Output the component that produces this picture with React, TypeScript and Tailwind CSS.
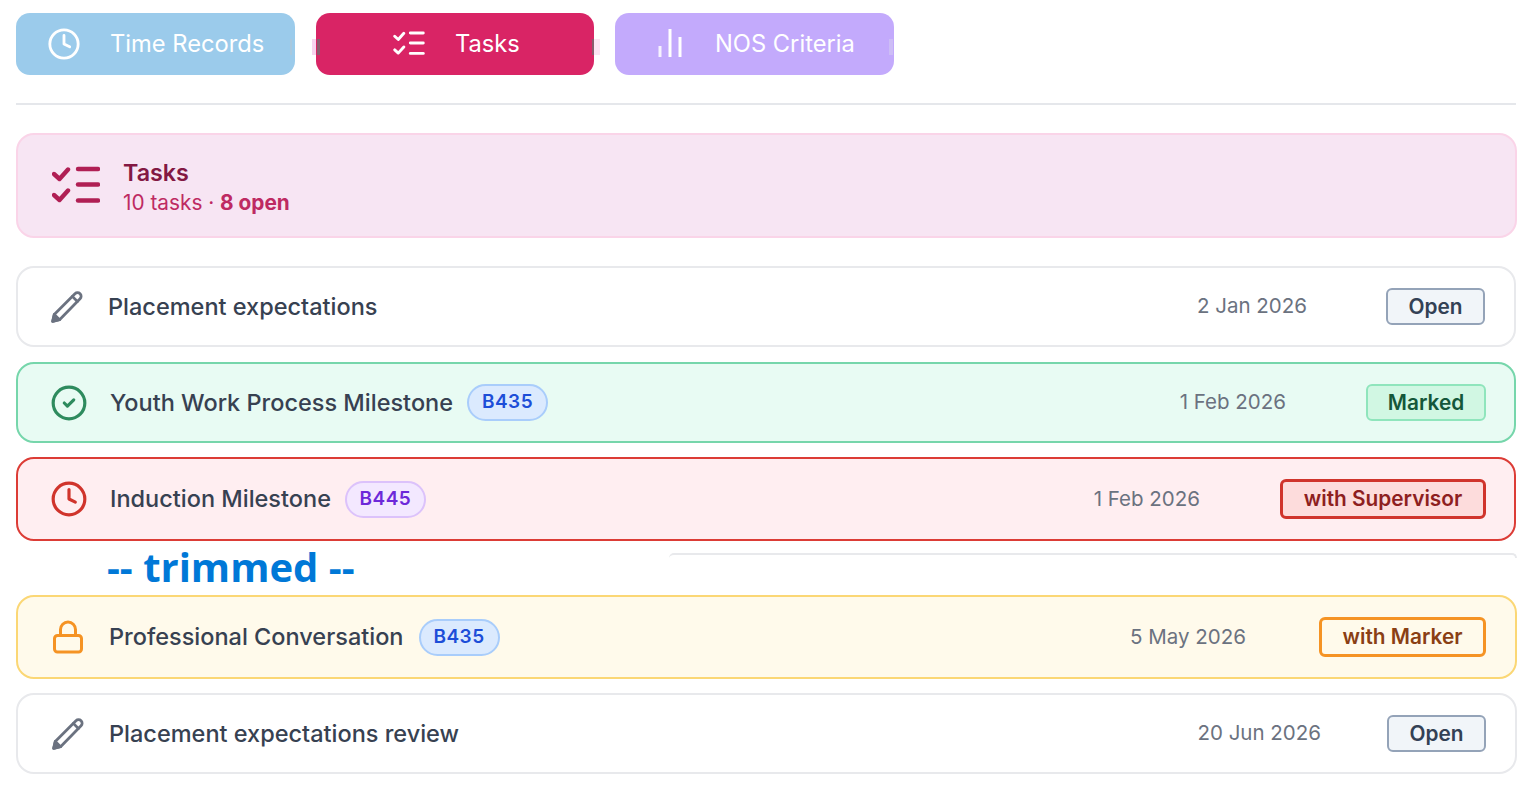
import { CircleCheck, Clock, Lock } from 'lucide-react'
import type { ReactNode } from 'react'

function TaskListIcon({ className }: { className?: string }) {
  return (
    <svg viewBox="0 0 48 40" fill="none" stroke="currentColor" strokeLinecap="round" strokeLinejoin="round" className={className}>
      <path d="M2 8l5.500 5L16 3.500" />
      <path d="M2 29l5.500 5L16 24.500" />
      <path d="M26 3h20" />
      <path d="M26 18.500h20" />
      <path d="M26 34.500h20" />
    </svg>
  )
}

function BarsIcon({ className }: { className?: string }) {
  return (
    <svg viewBox="0 0 24 30" fill="none" stroke="currentColor" strokeWidth="3" className={className}>
      <path d="M2 29V18" strokeOpacity="0.85" />
      <path d="M12 29V1" />
      <path d="M22 29V9" />
    </svg>
  )
}

function PencilIcon({ className }: { className?: string }) {
  return (
    <svg viewBox="0 0 32 32" fill="none" stroke="currentColor" strokeWidth="2.600" strokeLinecap="round" strokeLinejoin="round" className={className}>
      <path d="M2.500 29.500l1.500-6.500L23.500 3.500a3.400 3.400 0 0 1 4.800 0 3.400 3.400 0 0 1 0 4.800L9 28z" />
      <path d="M21 6l4.800 4.800" />
      <path d="M2.500 29.500l1.500-6.500L9 28z" fill="currentColor" />
    </svg>
  )
}

type Row = {
  title: string
  date: string
  status: string
  icon: ReactNode
  card: string
  pad: string
  iconGap: string
  tag?: { label: string; className: string }
  dateGap: string
  badge: string
}

const blueTag = 'border-[#a9cdfb] bg-[#dbeafe] text-[#1d4ed8]'
const purpleTag = 'border-[#dcc2fb] bg-[#f3e8ff] text-[#6d28d9]'

const upperRows: Row[] = [
  {
    title: 'Placement expectations',
    date: '2 Jan 2026',
    status: 'Open',
    icon: <PencilIcon className="size-[34px] text-[#6b7280]" />,
    card: 'h-[81px] border-[#e8e9ec] bg-white',
    pad: 'pl-[32px] pr-[29px]',
    iconGap: 'gap-[24px]',
    dateGap: 'gap-[79px]',
    badge: 'h-[37px] w-[99px] border-[#94a3b8] bg-[#f1f5f9] text-[#334155]',
  },
  {
    title: 'Youth Work Process Milestone',
    date: '1 Feb 2026',
    status: 'Marked',
    icon: <CircleCheck className="size-[38px] text-[#2e8b5e]" strokeWidth={2} />,
    card: 'mt-[15px] h-[81px] border-[#76d6ab] bg-[#e8fbf3]',
    pad: 'pl-[32px] pr-[28px]',
    iconGap: 'gap-[22px]',
    tag: { label: 'B435', className: blueTag },
    dateGap: 'gap-[80px]',
    badge: 'h-[37px] w-[120px] border-[#8fe5bc] bg-[#d1f7e3] text-[#14573a]',
  },
  {
    title: 'Induction Milestone',
    date: '1 Feb 2026',
    status: 'with Supervisor',
    icon: <Clock className="size-[38px] text-[#d0342c]" strokeWidth={2} />,
    card: 'mt-[14px] h-[84px] border-[#dc3c36] bg-[#ffeef1]',
    pad: 'pl-[32px] pr-[28px]',
    iconGap: 'gap-[22px]',
    tag: { label: 'B445', className: purpleTag },
    dateGap: 'gap-[80px]',
    badge: 'h-[40px] w-[206px] border-[3px] border-[#d0342c] bg-[#fddcdc] text-[#8e1f1f]',
  },
]

const lowerRows: Row[] = [
  {
    title: 'Professional Conversation',
    date: '5 May 2026',
    status: 'with Marker',
    icon: <Lock className="size-[36px] text-[#f59324]" strokeWidth={2} />,
    card: 'h-[84px] border-[#fbd775] bg-[#fffaeb]',
    pad: 'pl-[32px] pr-[29px]',
    iconGap: 'gap-[23px]',
    tag: { label: 'B435', className: blueTag },
    dateGap: 'gap-[73px]',
    badge: 'h-[40px] w-[167px] border-[3px] border-[#f59324] bg-[#fffaeb] text-[#8a3f14]',
  },
  {
    title: 'Placement expectations review',
    date: '20 Jun 2026',
    status: 'Open',
    icon: <PencilIcon className="size-[34px] text-[#6b7280]" />,
    card: 'mt-[14px] h-[81px] border-[#e8e9ec] bg-white',
    pad: 'pl-[33px] pr-[29px]',
    iconGap: 'gap-[24px]',
    dateGap: 'gap-[66px]',
    badge: 'h-[37px] w-[99px] border-[#94a3b8] bg-[#f1f5f9] text-[#334155]',
  },
]

function TaskRow({ row }: { row: Row }) {
  return (
    <div className={`flex items-center justify-between rounded-[18px] border-2 ${row.card} ${row.pad}`}>
      <div className={`flex items-center ${row.iconGap}`}>
        {row.icon}
        <span className="text-[23.500px] font-medium text-[#374151]">{row.title}</span>
        {row.tag && (
          <span className={`-ml-[8px] flex h-[37px] w-[81px] items-center justify-center rounded-full border-2 text-[19px] font-semibold tracking-[0.5px] ${row.tag.className}`}>
            {row.tag.label}
          </span>
        )}
      </div>
      <div className={`flex items-center ${row.dateGap}`}>
        <span className="text-[20.500px] text-[#6b7280]">{row.date}</span>
        <span className={`flex items-center justify-center rounded-[6px] border-2 text-[20.800px] font-semibold ${row.badge}`}>
          {row.status}
        </span>
      </div>
    </div>
  )
}

export default function App() {
  return (
    <div className="min-h-[786px] bg-white px-[12px] pt-[13px] font-['Inter',sans-serif]">
      <div className="pl-[4px] pr-0">
        <div className="flex gap-[21px]">
          <div className="relative flex h-[62px] w-[279px] items-center rounded-[14px] bg-[#9bcbeb] pl-[31px] text-white">
            <Clock className="size-[34px]" strokeWidth={2} />
            <span className="ml-[29px] text-[23.700px]">Time Records</span>
            <span className="absolute right-[3px] top-[26px] h-[16px] w-[2px] bg-[#a8c8de]" />
          </div>
          <div className="relative flex h-[62px] w-[278px] items-center rounded-[14px] bg-[#d92465] pl-[77px] text-white">
            <TaskListIcon className="h-[26px] w-[32px] stroke-[4.400px]" />
            <span className="ml-[30px] text-[23.700px]">Tasks</span>
            <span className="absolute -left-[4px] top-[26px] h-[16px] w-[4px] bg-[#f7d3ee]" />
            <span className="absolute left-[1px] top-[26px] h-[16px] w-[3px] bg-[#8a5a6c]" />
            <span className="absolute right-[0px] top-[26px] h-[16px] w-[2px] bg-[#8a5a6c]" />
            <span className="absolute -right-[6px] top-[26px] h-[16px] w-[6px] bg-[#fde3f3]" />
          </div>
          <div className="relative flex h-[62px] w-[279px] items-center rounded-[14px] bg-[#c3aafc] pl-[43px] text-white">
            <BarsIcon className="mb-[2px] h-[30px] w-[24px]" />
            <span className="ml-[33px] text-[23.700px]">NOS Criteria</span>
            <span className="absolute right-[1px] top-[26px] h-[16px] w-[4px] bg-[#cdbdf6]" />
          </div>
        </div>

        <div className="mt-[28px] h-[2px] w-[1500px] bg-[#e5e7eb]" />

        <div className="mt-[28px] flex h-[105px] w-[1501px] items-center rounded-[18px] border-2 border-[#fad4e8] bg-[#f7e5f3] pl-[34px]">
          <TaskListIcon className="h-[40px] w-[48px] stroke-[4.400px] text-[#b01f54]" />
          <div className="ml-[23px] flex flex-col pt-[3px]">
            <span className="text-[23.300px] font-semibold leading-[31px] text-[#831843]">Tasks</span>
            <span className="text-[20.800px] leading-[29px] text-[#be2a62]">
              10 tasks · <span className="font-bold">8 open</span>
            </span>
          </div>
        </div>

        <div className="mt-[28px] flex w-[1500px] flex-col">
          {upperRows.map((row) => (
            <TaskRow key={row.title} row={row} />
          ))}
        </div>

        <div className="flex h-[54px] items-start justify-between">
          <span className="ml-[91px] mt-[1px] font-['Open_Sans',sans-serif] text-[40px] font-bold leading-[50px] text-[#0078d7]">-- trimmed --</span>
          <div className="mr-[-1px] mt-[12px] h-[5px] w-[848px] rounded-t-[14px] border-t-2 border-r-2 border-[#e8e9ec]" />
        </div>

        <div className="flex w-[1501px] flex-col">
          {lowerRows.map((row) => (
            <TaskRow key={row.title} row={row} />
          ))}
        </div>
      </div>
    </div>
  )
}
